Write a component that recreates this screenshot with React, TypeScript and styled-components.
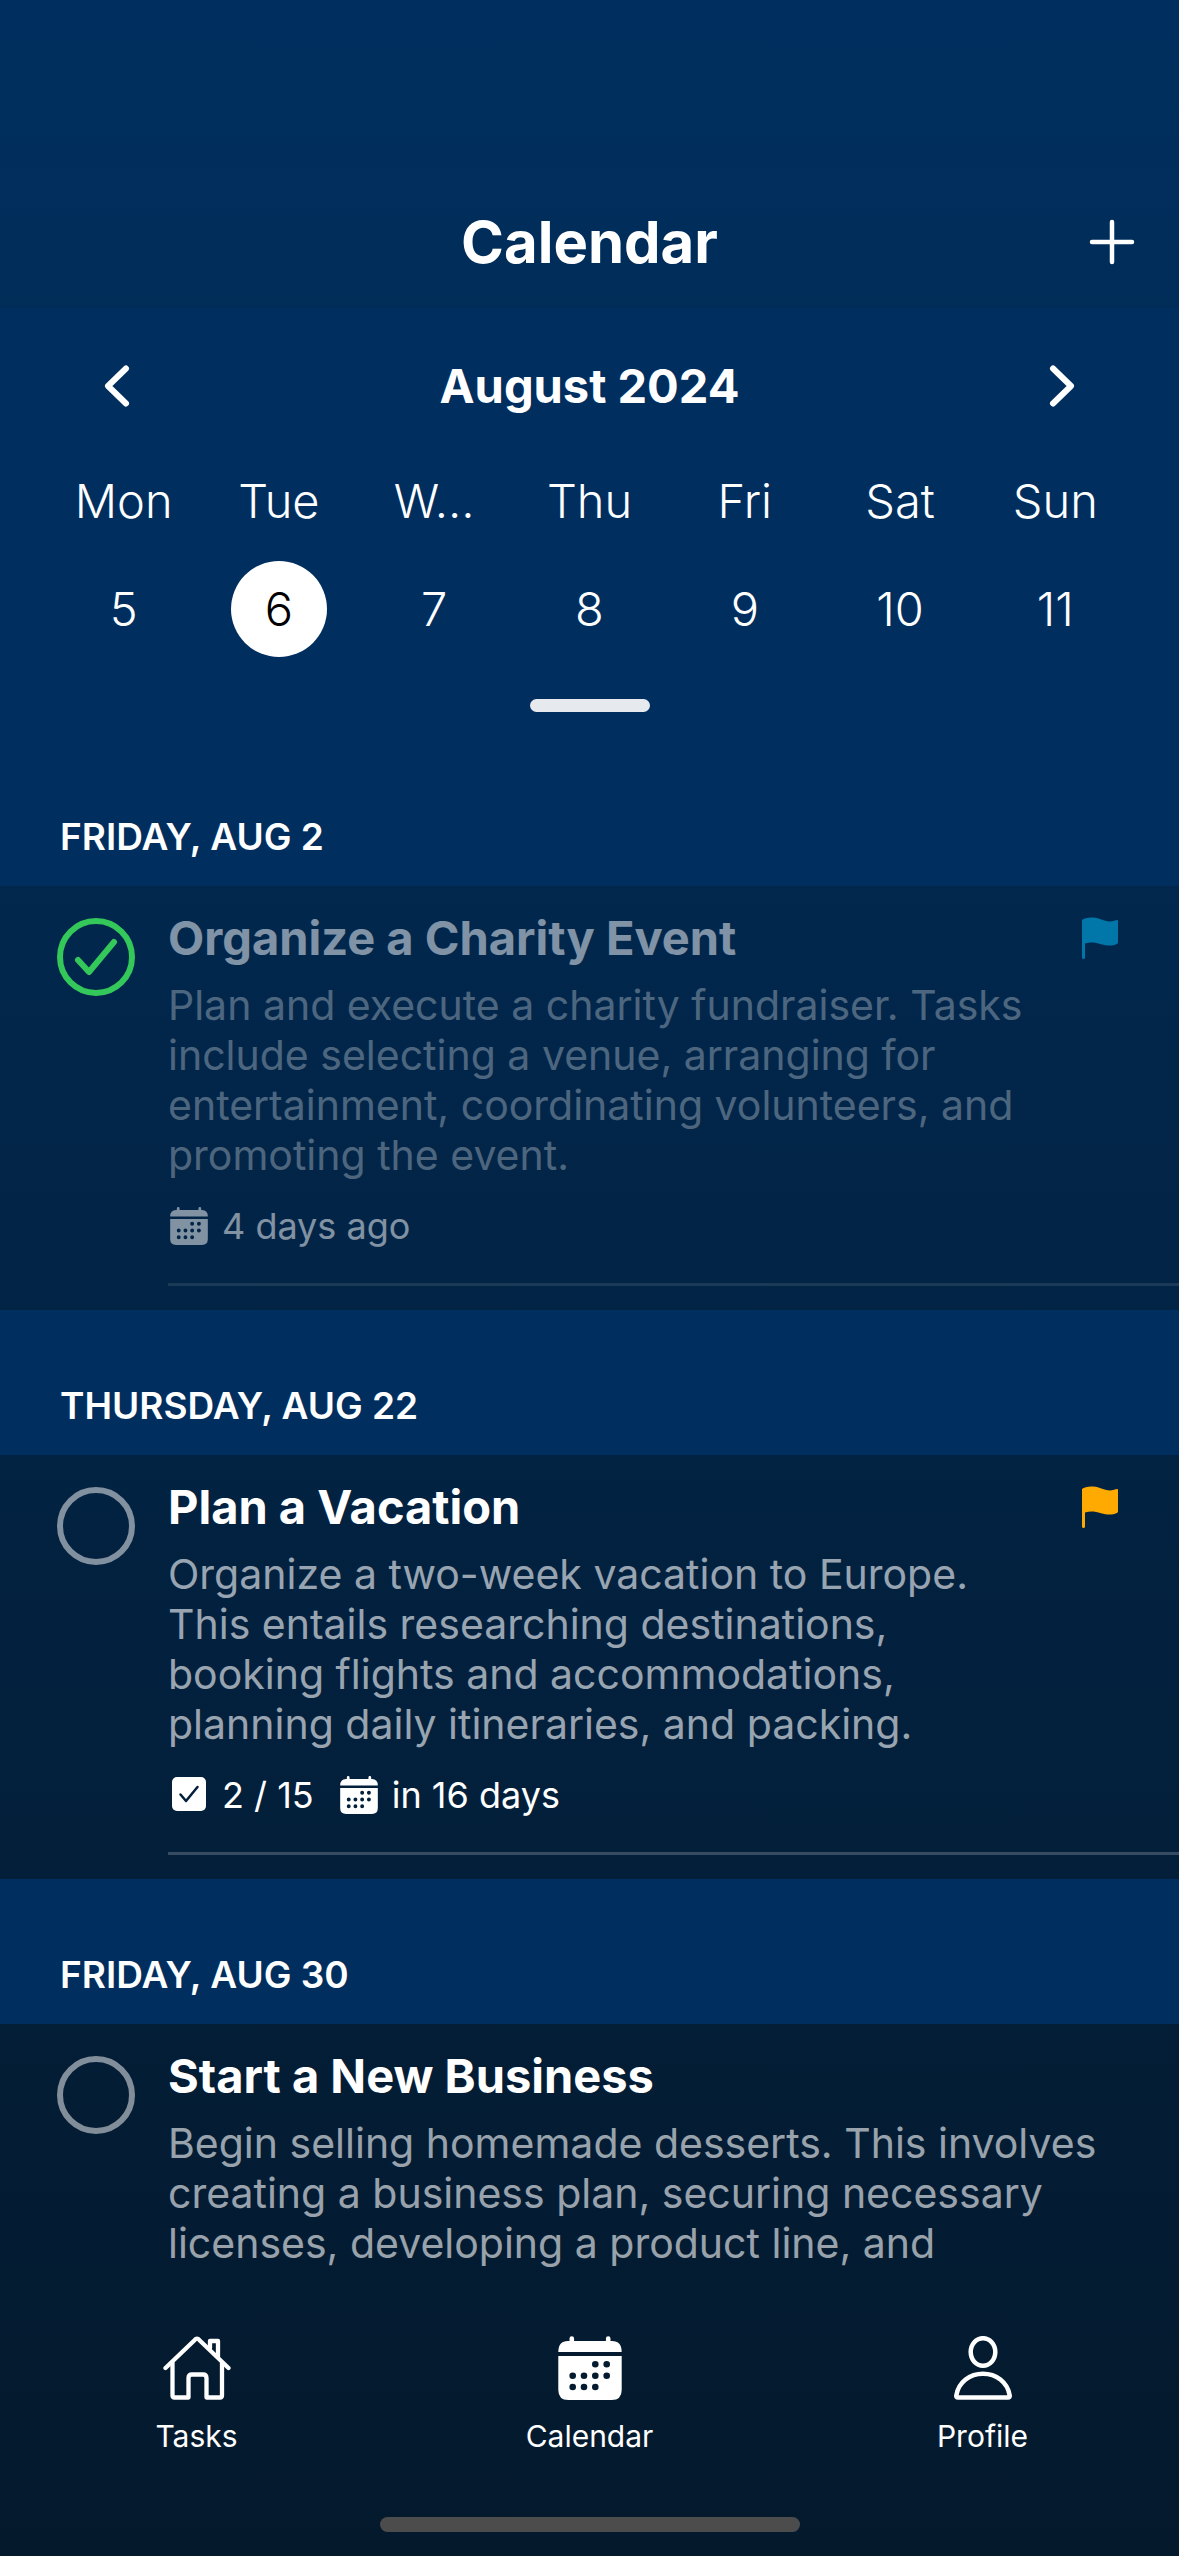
import React, { useState } from "react";
import styled, { createGlobalStyle } from "styled-components";

const navy = "#002f5f";

const GlobalStyle = createGlobalStyle`
  *, *::before, *::after { box-sizing: border-box; }
  body {
    margin: 0;
    background: ${navy};
    color: #ffffff;
    font-family: Inter, "Liberation Sans", sans-serif;
  }
  button { font: inherit; color: inherit; background: none; border: 0; padding: 0; cursor: pointer; }
  h1, h2, h3, p, ul { margin: 0; padding: 0; }
  ul { list-style: none; }
  svg { display: block; }
`;

const Page = styled.div`
  display: flex;
  flex-direction: column;
  min-height: 100vh;
  background: linear-gradient(${navy}, #04192c);
`;

const TopBar = styled.header`
  display: grid;
  grid-template-columns: 1fr auto 1fr;
  align-items: center;
  padding: 206px 44px 30px;
`;

const ScreenTitle = styled.h1`
  grid-column: 2;
  font-size: 58px;
  line-height: 72px;
  font-weight: 700;
`;

const AddButton = styled.button`
  justify-self: end;
`;

const WeekPanel = styled.section`
  display: flex;
  flex-direction: column;
  padding: 48px 46px 29px;
  background: ${navy};
`;

const MonthRow = styled.div`
  display: flex;
  align-items: center;
  justify-content: space-between;
  padding: 0 58px;
`;

const MonthName = styled.h2`
  font-size: 47px;
  line-height: 60px;
  font-weight: 700;
`;

const WeekGrid = styled.div`
  display: grid;
  grid-template-columns: repeat(7, 1fr);
  justify-items: center;
  row-gap: 31px;
  margin-top: 56px;
  font-size: 47px;
  font-weight: 300;
`;

const Weekday = styled.span`
  line-height: 58px;
`;

const DayButton = styled.button<{ $selected: boolean }>`
  width: 96px;
  height: 96px;
  padding-bottom: 2px;
  border-radius: 50%;
  background: ${(p) => (p.$selected ? "#ffffff" : "transparent")};
  color: ${(p) => (p.$selected ? "#000000" : "#ffffff")};
`;

const Grabber = styled.button`
  align-self: center;
  width: 120px;
  height: 13px;
  margin-top: 42px;
  border-radius: 7px;
  background: #e6eaef;
`;

const DayHeading = styled.h2`
  padding: 72px 60px 25px;
  background: ${navy};
  font-size: 37px;
  line-height: 48px;
  font-weight: 600;
  text-transform: uppercase;
`;

const TaskRow = styled.article`
  display: flex;
  padding-left: 57px;
`;

const CheckCell = styled.label`
  display: grid;
  flex: none;
  align-self: flex-start;
  margin: 32px 33px 0 0;
  cursor: pointer;
  > * { grid-area: 1 / 1; }
`;

const CheckInput = styled.input`
  appearance: none;
  width: 78px;
  height: 78px;
  margin: 0;
  border: 6px solid rgba(255, 255, 255, 0.5);
  border-radius: 50%;
  &:checked { border-color: #34c759; }
`;

const TaskMain = styled.div`
  flex: 1;
  min-width: 0;
  padding-bottom: 24px;
`;

const TaskContent = styled.div<{ $line: boolean; $dim: boolean }>`
  display: flex;
  gap: 40px;
  padding: 22px 61px ${(p) => (p.$line ? "33px" : "0")} 0;
  border-bottom: ${(p) => (p.$line ? "3px" : "0")} solid rgba(255, 255, 255, ${(p) => (p.$dim ? 0.1 : 0.2)});
`;

const TaskText = styled.div<{ $dim: boolean }>`
  flex: 1;
  opacity: ${(p) => (p.$dim ? 0.5 : 1)};
`;

const TaskTitle = styled.h3`
  font-size: 47px;
  line-height: 60px;
  font-weight: 700;
`;

const TaskNote = styled.p`
  margin-top: 12px;
  font-size: 41px;
  line-height: 50px;
  color: rgba(255, 255, 255, 0.6);
`;

const MetaList = styled.ul`
  display: flex;
  gap: 24px;
  margin-top: 22px;
  font-size: 36px;
  line-height: 48px;
`;

const MetaItem = styled.li`
  display: flex;
  align-items: center;
  gap: 14px;
  padding-left: 2px;
`;

const FlagCell = styled.span`
  flex: none;
  margin-top: 9px;
`;

const BottomBar = styled.footer`
  display: flex;
  flex-direction: column;
  align-items: center;
  gap: 63px;
  margin-top: auto;
  padding-bottom: 24px;
`;

const Tabs = styled.nav`
  display: grid;
  grid-template-columns: repeat(3, 1fr);
  width: 100%;
`;

const Tab = styled.a`
  display: flex;
  flex-direction: column;
  align-items: center;
  gap: 18px;
  color: inherit;
  text-decoration: none;
  font-size: 30px;
  line-height: 36px;
`;

const HomeIndicator = styled.div`
  width: 420px;
  height: 15px;
  border-radius: 8px;
  background: #4c4c4c;
`;

const Plus = () => (
  <svg width="46" height="46" viewBox="0 0 46 46" stroke="#fff" strokeWidth="4.5" strokeLinecap="round">
    <path d="M23 3v40M3 23h40" />
  </svg>
);

const Chevron = ({ right }: { right?: boolean }) => (
  <svg width="26" height="42" viewBox="0 0 26 42" fill="none" stroke="#fff" strokeWidth="6" strokeLinecap="round" strokeLinejoin="round">
    <path d={right ? "M4 3.5 22 21 4 38.5" : "M22 3.5 4 21 22 38.5"} />
  </svg>
);

const Tick = () => (
  <svg width="78" height="78" viewBox="0 0 78 78" fill="none" stroke="#34c759" strokeWidth="6" strokeLinecap="round" strokeLinejoin="round">
    <path d="M21 42 32 54 57 24" />
  </svg>
);

const Flag = ({ color }: { color: string }) => (
  <svg width="36" height="42" viewBox="0 0 36 42" fill={color}>
    <path d="M0 3C3 .3 11-.6 18 2c7 2.800 11 3.300 16.600 1.100Q36 2.600 36 4V25.500Q36 26.600 34.800 27C30 29.300 25 28.900 19 27.200 13 25.300 8 25 3 26.500V40.500Q3 42 1.500 42T0 40.500Z" />
  </svg>
);

const dots = [[37.3, 28.3], [48.7, 28.3], [14.7, 39.7], [26, 39.7], [37.3, 39.7], [48.7, 39.7], [14.7, 51], [26, 51], [37.3, 51]];
const dotHoles = dots.map(([x, y]) => `M${x - 3.3} ${y}a3.300 3.300 0 1 0 6.600 0a3.300 3.300 0 1 0-6.600 0Z`).join("");

const CalendarIcon = ({ size }: { size: number }) => (
  <svg width={size} height={size} viewBox="0 0 64 64" fill="#fff" fillRule="evenodd">
    <path d="M0.300 16Q.3 5 10 5h1.500V2.500a2.300 2.300 0 0 1 4.600 0V5h31.800V2.500a2.300 2.300 0 0 1 4.600 0V5H54q9.700 0 9.700 11Z" />
    <path d={`M.3 20H63.700V54q0 10-10 10H10.300q-10 0-10-10Z${dotHoles}`} />
  </svg>
);

const ChecklistIcon = () => (
  <svg width="38" height="38" viewBox="0 0 38 38">
    <rect x="2" y="1" width="34" height="34" rx="5" fill="#fff" />
    <path d="M10.500 18.500 16 25 27.500 11" fill="none" stroke="#041f39" strokeWidth="2.500" strokeLinecap="round" strokeLinejoin="round" />
  </svg>
);

const HomeIcon = () => (
  <svg width="68" height="64" viewBox="0 0 68 64" fill="none" stroke="#fff" strokeWidth="4.300" strokeLinecap="round" strokeLinejoin="round">
    <path d="M2.500 32 31.500 4.200Q34 1.200 36.500 4.200L65.500 32" />
    <path d="M9.500 27V59.500q0 2 2 2H25.500V42q0-3.500 3.500-3.500H40q3.500 0 3.500 3.500V61.500H57q2 0 2-2V27" />
    <path d="M47 12V5H55V21" />
  </svg>
);

const ProfileIcon = () => (
  <svg width="58" height="64" viewBox="0 0 58 64" fill="none" stroke="#fff" strokeWidth="4.500" strokeLinejoin="round">
    <ellipse cx="29" cy="16" rx="12.300" ry="13.800" />
    <path d="M4 61.500H54Q56 61.500 55.700 59.500C53.500 46 42 37.800 29 37.800S4.500 46 2.300 59.500Q2 61.500 4 61.500Z" />
  </svg>
);

const week = [
  { name: "Mon", date: 5 },
  { name: "Tue", date: 6 },
  { name: "W...", date: 7 },
  { name: "Thu", date: 8 },
  { name: "Fri", date: 9 },
  { name: "Sat", date: 10 },
  { name: "Sun", date: 11 },
];

type Task = {
  day: string;
  title: string;
  note: string;
  done: boolean;
  flag?: string;
  progress?: string;
  due?: string;
};

const initialTasks: Task[] = [
  {
    day: "Friday, Aug 2",
    title: "Organize a Charity Event",
    note: "Plan and execute a charity fundraiser. Tasks include selecting a venue, arranging for entertainment, coordinating volunteers, and promoting the event.",
    done: true,
    flag: "#0076a9",
    due: "4 days ago",
  },
  {
    day: "Thursday, Aug 22",
    title: "Plan a Vacation",
    note: "Organize a two-week vacation to Europe. This entails researching destinations, booking flights and accommodations, planning daily itineraries, and packing.",
    done: false,
    flag: "#ffaa00",
    progress: "2 / 15",
    due: "in 16 days",
  },
  {
    day: "Friday, Aug 30",
    title: "Start a New Business",
    note: "Begin selling homemade desserts. This involves creating a business plan, securing necessary licenses, developing a product line, and",
    done: false,
  },
];

export default function App() {
  const [selected, setSelected] = useState(6);
  const [tasks, setTasks] = useState(initialTasks);
  const toggle = (title: string) =>
    setTasks((list) => list.map((t) => (t.title === title ? { ...t, done: !t.done } : t)));

  return (
    <Page>
      <GlobalStyle />
      <TopBar>
        <ScreenTitle>Calendar</ScreenTitle>
        <AddButton type="button" aria-label="Add task"><Plus /></AddButton>
      </TopBar>

      <WeekPanel>
        <MonthRow>
          <button type="button" aria-label="Previous week"><Chevron /></button>
          <MonthName>August 2024</MonthName>
          <button type="button" aria-label="Next week"><Chevron right /></button>
        </MonthRow>
        <WeekGrid>
          {week.map((d) => <Weekday key={d.name}>{d.name}</Weekday>)}
          {week.map((d) => (
            <DayButton key={d.date} type="button" $selected={d.date === selected} onClick={() => setSelected(d.date)}>
              {d.date}
            </DayButton>
          ))}
        </WeekGrid>
        <Grabber type="button" aria-label="Expand calendar" />
      </WeekPanel>

      <main>
        {tasks.map((t) => (
          <section key={t.title}>
            <DayHeading>{t.day}</DayHeading>
            <TaskRow>
              <CheckCell>
                <CheckInput type="checkbox" aria-label={t.title} checked={t.done} onChange={() => toggle(t.title)} />
                {t.done && <Tick />}
              </CheckCell>
              <TaskMain>
                <TaskContent $line={!!t.due} $dim={t.done}>
                  <TaskText $dim={t.done}>
                    <TaskTitle>{t.title}</TaskTitle>
                    <TaskNote>{t.note}</TaskNote>
                    {t.due && (
                      <MetaList>
                        {t.progress && <MetaItem><ChecklistIcon />{t.progress}</MetaItem>}
                        <MetaItem><CalendarIcon size={38} />{t.due}</MetaItem>
                      </MetaList>
                    )}
                  </TaskText>
                  {t.flag && <FlagCell><Flag color={t.flag} /></FlagCell>}
                </TaskContent>
              </TaskMain>
            </TaskRow>
          </section>
        ))}
      </main>

      <BottomBar>
        <Tabs>
          <Tab href="#tasks"><HomeIcon />Tasks</Tab>
          <Tab href="#calendar" aria-current="page"><CalendarIcon size={64} />Calendar</Tab>
          <Tab href="#profile"><ProfileIcon />Profile</Tab>
        </Tabs>
        <HomeIndicator />
      </BottomBar>
    </Page>
  );
}
